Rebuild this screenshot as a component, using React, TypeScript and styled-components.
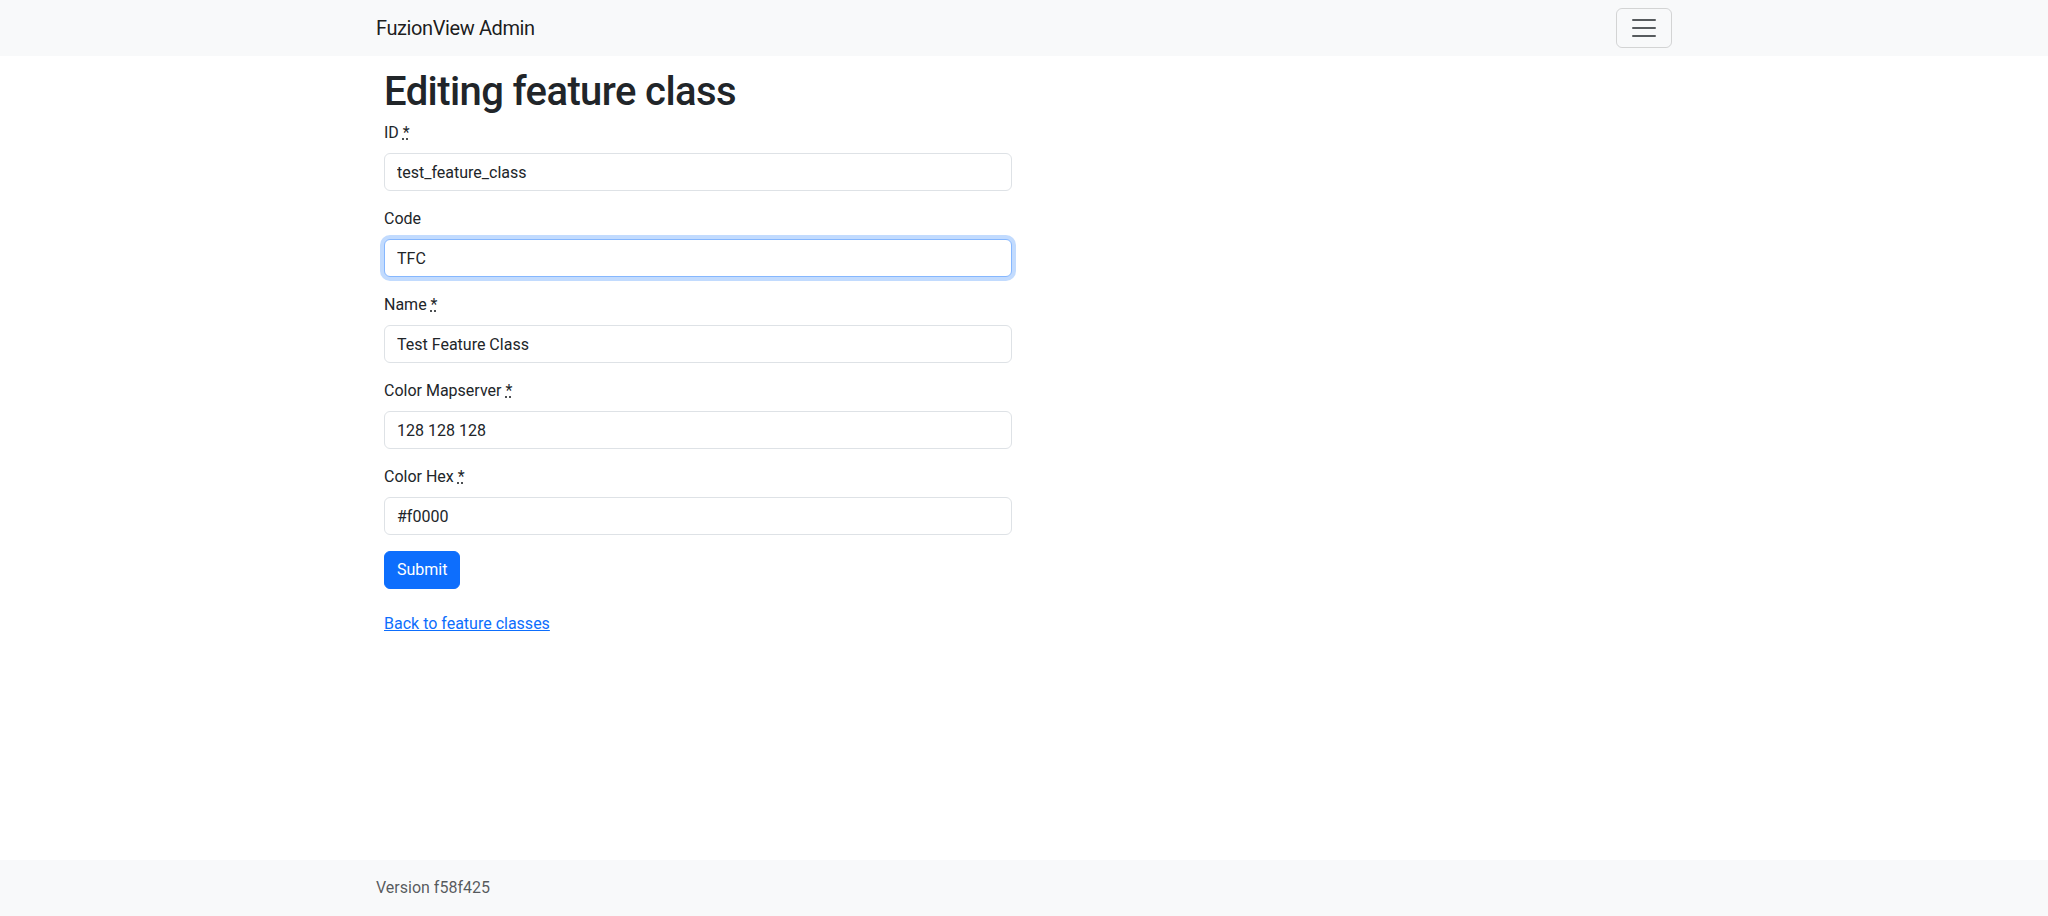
import React from "react";
import styled, { createGlobalStyle, css } from "styled-components";

const GlobalStyle = createGlobalStyle`
  *, *::before, *::after { box-sizing: border-box; }
  html, body { margin: 0; padding: 0; }
  body {
    font-family: Roboto, "Liberation Sans", Arial, sans-serif;
    font-size: 16px;
    line-height: 1.5;
    color: #212529;
    background: #fff;
  }
`;

const Page = styled.div`
  min-height: 100vh;
  display: flex;
  flex-direction: column;
`;

const Container = styled.div`
  width: 100%;
  max-width: 1320px;
  margin: 0 auto;
  padding: 0 12px;
`;

const NavBar = styled.nav`
  background: #f8f9fa;
  padding: 8px 0;
`;

const NavInner = styled(Container)`
  display: flex;
  align-items: center;
  justify-content: space-between;
`;

const Brand = styled.a`
  font-size: 20px;
  line-height: 30px;
  padding: 5px 0;
  letter-spacing: -0.4px;
  color: rgba(0, 0, 0, 0.9);
  text-decoration: none;
`;

const Toggler = styled.button`
  width: 56px;
  height: 40px;
  padding: 4px 12px;
  background: transparent;
  border: 1px solid rgba(0, 0, 0, 0.15);
  border-radius: 6px;
  display: flex;
  align-items: center;
  justify-content: center;
  cursor: pointer;
`;

const Main = styled.main`
  flex: 1;
`;

const MainInner = styled(Container)`
  padding: 8px 20px;
`;

const Column = styled.div`
  width: 628px;
`;

const Title = styled.h1`
  margin: 0 0 5px;
  padding-top: 4px;
  font-size: 40px;
  font-weight: 500;
  line-height: 48px;
  letter-spacing: -0.6px;
`;

const Field = styled.div`
  margin-bottom: 16px;
`;

const Label = styled.label`
  display: inline-block;
  margin-bottom: 8px;
`;

const Required = styled.abbr`
  text-decoration: underline dotted;
  cursor: help;
`;

const Input = styled.input<{ $focused?: boolean }>`
  display: block;
  width: 100%;
  height: 38px;
  padding: 6px 12px;
  font: inherit;
  color: #212529;
  background: #fff;
  border: 1px solid #dee2e6;
  border-radius: 6px;
  outline: none;
  ${(p) =>
    p.$focused &&
    css`
      border-color: #86b7fe;
      box-shadow: 0 0 0 4px rgba(13, 110, 253, 0.25);
    `}
`;

const SubmitButton = styled.button`
  display: inline-block;
  height: 38px;
  padding: 6px 12px;
  font: inherit;
  color: #fff;
  background: #0d6efd;
  border: 1px solid #0d6efd;
  border-radius: 6px;
  cursor: pointer;
`;

const BackRow = styled.div`
  margin-top: 23px;
`;

const Link = styled.a`
  color: #0d6efd;
  text-decoration: underline;
`;

const Footer = styled.footer`
  background: #f8f9fa;
  padding: 16px 0;
`;

const FooterText = styled.span`
  color: rgba(33, 37, 41, 0.75);
`;

const fields: { label: string; value: string; required: boolean; focused?: boolean }[] = [
  { label: "ID", value: "test_feature_class", required: true },
  { label: "Code", value: "TFC", required: false, focused: true },
  { label: "Name", value: "Test Feature Class", required: true },
  { label: "Color Mapserver", value: "128 128 128", required: true },
  { label: "Color Hex", value: "#f0000", required: true },
];

export default function App() {
  return (
    <Page>
      <GlobalStyle />
      <NavBar>
        <NavInner>
          <Brand href="#">FuzionView Admin</Brand>
          <Toggler aria-label="Toggle navigation">
            <svg width="30" height="30" viewBox="0 0 30 30">
              <path
                d="M4 7h22M4 15h22M4 23h22"
                stroke="rgba(33,37,41,0.75)"
                strokeWidth="2"
                strokeLinecap="round"
                strokeMiterlimit="10"
              />
            </svg>
          </Toggler>
        </NavInner>
      </NavBar>
      <Main>
        <MainInner>
          <Column>
            <Title>Editing feature class</Title>
            <form onSubmit={(e) => e.preventDefault()}>
              {fields.map((f) => (
                <Field key={f.label}>
                  <Label>
                    {f.label}
                    {f.required && (
                      <>
                        {" "}
                        <Required title="required">*</Required>
                      </>
                    )}
                  </Label>
                  <Input $focused={f.focused} defaultValue={f.value} />
                </Field>
              ))}
              <SubmitButton type="submit">Submit</SubmitButton>
            </form>
            <BackRow>
              <Link href="#">Back to feature classes</Link>
            </BackRow>
          </Column>
        </MainInner>
      </Main>
      <Footer>
        <Container>
          <FooterText>Version f58f425</FooterText>
        </Container>
      </Footer>
    </Page>
  );
}
